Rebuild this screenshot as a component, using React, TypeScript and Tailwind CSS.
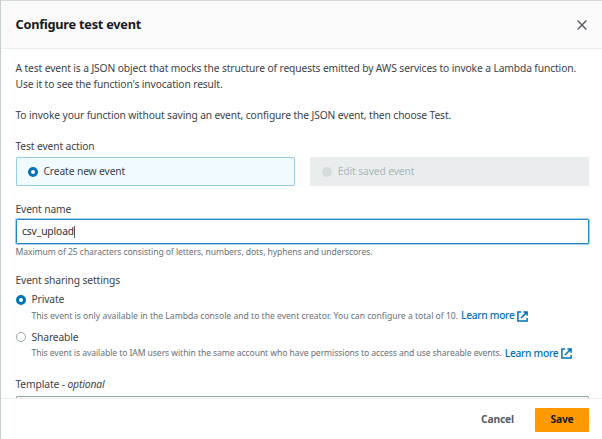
import type { ReactNode } from "react";

function ExternalIcon() {
  return (
    <svg className="ml-[3px] h-[11px] w-[11px] shrink-0" viewBox="0 0 11 11" fill="none" stroke="#0073bb" strokeWidth="1.5">
      <path d="M4.2 1H.9v9.1h9.2V7" />
      <path d="M6.4.9h3.7v3.8M9.9 1.1 4 7" />
    </svg>
  );
}

function LearnMore() {
  return (
    <a className="flex items-center text-[10.25px] font-medium text-[#0073bb]">
      <span className="tracking-[-0.32px]">Learn more</span>
      <ExternalIcon />
    </a>
  );
}

function Radio({ checked, disabled }: { checked?: boolean; disabled?: boolean }) {
  if (disabled) return <span className="size-[10px] shrink-0 rounded-full bg-[#d5dbdb]" />;
  return checked ? (
    <span className="size-[10px] shrink-0 rounded-full border-[3px] border-[#0073bb] bg-white" />
  ) : (
    <span className="size-[10px] shrink-0 rounded-full border border-[#95a5a6] bg-white" />
  );
}

function Label({ children }: { children: ReactNode }) {
  return <div className="h-4 leading-4">{children}</div>;
}

export default function App() {
  return (
    <div className="flex h-[439px] w-[602px] flex-col overflow-hidden border-t border-l border-t-[#d5dbdb] border-l-[#c6cece] bg-white font-['Noto_Sans','Open_Sans',sans-serif] text-[10.25px] tracking-[-0.11px] whitespace-nowrap text-[#3b4149]">
      <header className="flex h-12 shrink-0 items-center justify-between border-b border-[#eaeded] bg-[#fafafa] pr-[15px] pl-[14.5px]">
        <h1 className="text-[12.75px] font-bold tracking-[-0.24px] text-[#16191f]"><span>Configure test event</span></h1>
        <svg className="h-[10px] w-[10px]" viewBox="0 0 10 10" stroke="#545b64" strokeWidth="1.4">
          <path d="m.6.6 8.8 8.8M9.4.6.6 9.4" />
        </svg>
      </header>
      <main className="flex h-[349px] shrink-0 flex-col overflow-hidden pr-[13px] pl-[14.5px]">
        <p className="mt-[11px] leading-4">
          <span>A test event is a JSON object that mocks the structure of requests emitted by AWS services to invoke a Lambda function.</span>
          <br />
          <span>Use it to see the function's invocation result.</span>
        </p>
        <p className="mt-[15px] mb-[15px] leading-4"><span>To invoke your function without saving an event, configure the JSON event, then choose Test.</span></p>
        <Label><span>Test event action</span></Label>
        <div className="mt-[3px] grid h-[29px] shrink-0 grid-cols-2 gap-[15px]">
          <div className="flex items-center gap-[6px] rounded-[1px] border border-[#99cbe4] bg-[#f1faff] pl-[11px]">
            <Radio checked />
            <span>Create new event</span>
          </div>
          <div className="flex items-center gap-[6px] rounded-[1px] bg-[#eaeded] pl-3 text-[#aab7b8]">
            <Radio disabled />
            <span>Edit saved event</span>
          </div>
        </div>
        <div className="mt-[15px]"><Label><span>Event name</span></Label></div>
        <div className="mt-[2px] flex h-[25px] shrink-0 items-center rounded-[1px] border border-[#2586c5] pl-[5.5px] text-[#2b3037] shadow-[0_0_0_1px_#a7cfe8]">
          <span>csv_upload</span>
          <span className="h-3 w-px bg-[#545b64]" />
        </div>
        <div className="h-4 text-[8.6px] leading-4 tracking-[-0.08px] text-[#687078]"><span>Maximum of 25 characters consisting of letters, numbers, dots, hyphens and underscores.</span></div>
        <div className="mt-3"><Label><span>Event sharing settings</span></Label></div>
        <div className="mt-1 flex h-4 items-center gap-[6px]">
          <Radio checked />
          <span>Private</span>
        </div>
        <div className="mt-px flex h-4 items-center gap-[3px] pl-4 text-[8.6px] tracking-[-0.01px] text-[#687078]">
          <span>This event is only available in the Lambda console and to the event creator. You can configure a total of 10.</span>
          <LearnMore />
        </div>
        <div className="mt-[6px] flex h-4 items-center gap-[6px]">
          <Radio />
          <span>Shareable</span>
        </div>
        <div className="mt-px flex h-4 items-center gap-[3px] pl-4 text-[8.6px] tracking-[-0.08px] text-[#687078]">
          <span>This event is available to IAM users within the same account who have permissions to access and use shareable events.</span>
          <LearnMore />
        </div>
        <div className="mt-[14px]"><Label><span>Template - </span><i>optional</i></Label></div>
        <div className="mt-[4px] h-6 shrink-0 rounded-[1px] border border-[#95a5a6]" />
      </main>
      <footer className="flex flex-1 items-start justify-end border-t border-[#eaeded] bg-white pt-[9px] pr-[13px] font-bold">
        <button className="mr-[21px] h-6 tracking-[-0.15px] text-[#545b64]"><span>Cancel</span></button>
        <button className="h-6 w-[54px] rounded-[1px] bg-[#ff9900] tracking-[-0.2px] text-[#16191f]"><span>Save</span></button>
      </footer>
    </div>
  );
}
